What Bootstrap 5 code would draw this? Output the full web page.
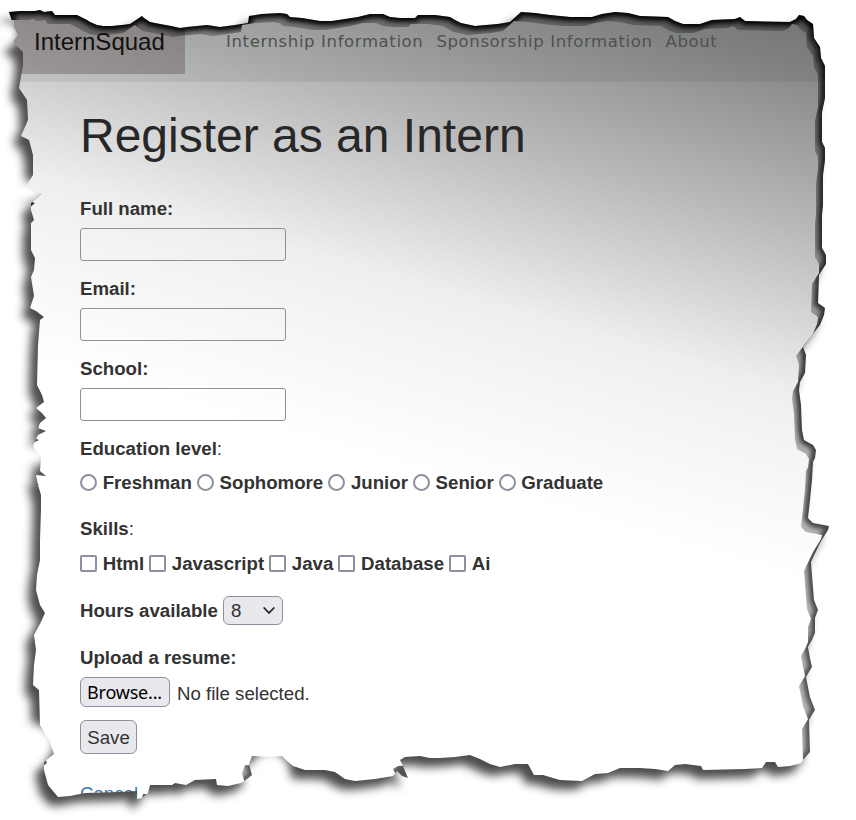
<!DOCTYPE html>
<html lang="en">
<head>
<meta charset="utf-8">
<meta name="viewport" content="width=device-width, initial-scale=1">
<title>Register as an Intern</title>
<link href="https://cdn.jsdelivr.net/npm/bootstrap@5.3.0/dist/css/bootstrap.min.css" rel="stylesheet">
<style>
  body { background: #fff; color: #333; font-family: "Liberation Sans", Arial, sans-serif; font-size: 18.67px; line-height: 28px; }
  .sheet { width: 856px; height: 820px; background: linear-gradient(196deg, #727272 0%, #888 8%, #b9b9b9 23%, #eee 38.4%, #f4f4f4 44%, #fff 56%); }
  .site-nav { height: 82px; padding: 0 0 0 14px; background: rgba(40, 65, 70, .09); }
  .site-brand { width: 171px; height: 74px; padding: 24px 0 0 20px; background: rgba(45, 25, 20, .25); color: #111; font-size: 24px; line-height: 36px; text-decoration: none; }
  .site-links { margin-left: 41px; padding-top: 28px; font-family: "DejaVu Sans", Verdana, sans-serif; font-size: 16.5px; }
  .site-links a { color: #505050; text-decoration: none; margin-right: 13px; letter-spacing: .62px; }
  .reg-form { padding: 25px 0 0 80px; }
  .reg-form h1 { font-size: 48px; line-height: 58px; font-weight: 400; color: #272727; margin: 0 0 29px; }
  .field-label { height: 28px; line-height: 30px; margin-bottom: 6px; }
  .text-box { width: 206px; height: 33px; margin-bottom: 13px; padding: 0 6px; border: 1px solid #8f8f9d; border-radius: 3px; background: transparent; }
  .options { gap: 5px; height: 28px; line-height: 30px; }
  .options label { gap: 5.7px; }
  .options input { appearance: none; width: 17px; height: 17px; border: 2px solid #8f8f9d; margin: 6px 0 0; background: #fff; }
  .options input[type=radio] { border-radius: 50%; }
  .options input[type=checkbox] { border-radius: 2px; }
  .level-row { margin-bottom: 18px; }
  .skill-title { margin-bottom: 7px; }
  .skill-row { margin-bottom: 19px; }
  .hours-row { margin-bottom: 18px; }
  .file-row { margin-bottom: 13px; }
  .grey-btn { background: #e9e9ed; border: 1px solid #8f8f9d; border-radius: 6px; color: #333; }
  .hours { width: 60px; height: 29px; margin-left: 5px; padding: 0 6px 0 7px; }
  .browse { width: 90px; height: 30px; color: #000; font-family: "Noto Sans", sans-serif; font-size: 18px; letter-spacing: -.2px; line-height: 28px; padding: 0 1px 0 0; }
  .file-name { margin-left: 7px; padding-top: 3px; line-height: 27px; }
  .save { width: 57px; height: 34px; padding: 1px 0 0; }
  .cancel-row { margin-top: 26px; }
  .cancel-link { color: #337ab7; text-decoration: none; }
  .torn { pointer-events: none; }
</style>
</head>
<body>
<div class="sheet position-relative overflow-hidden">
  <nav class="site-nav d-flex align-items-start">
    <a class="site-brand" href="#">InternSquad</a>
    <div class="site-links d-flex text-nowrap">
      <a href="#">Internship Information</a>
      <a href="#">Sponsorship Information</a>
      <a href="#">About</a>
    </div>
  </nav>

  <form class="reg-form">
    <h1>Register as an Intern</h1>
    <label class="field-label d-block fw-bold" for="fullName">Full name:</label>
    <input class="text-box d-block" type="text" id="fullName">
    <label class="field-label d-block fw-bold" for="email">Email:</label>
    <input class="text-box d-block" type="text" id="email">
    <label class="field-label d-block fw-bold" for="school">School:</label>
    <input class="text-box d-block" type="text" id="school">

    <div class="field-label"><b>Education level</b>:</div>
    <div class="options level-row d-flex fw-bold">
      <label class="d-flex align-items-start"><input type="radio" name="level">Freshman</label>
      <label class="d-flex align-items-start"><input type="radio" name="level">Sophomore</label>
      <label class="d-flex align-items-start"><input type="radio" name="level">Junior</label>
      <label class="d-flex align-items-start"><input type="radio" name="level">Senior</label>
      <label class="d-flex align-items-start"><input type="radio" name="level">Graduate</label>
    </div>

    <div class="field-label skill-title"><b>Skills</b>:</div>
    <div class="options skill-row d-flex fw-bold">
      <label class="d-flex align-items-start"><input type="checkbox">Html</label>
      <label class="d-flex align-items-start"><input type="checkbox">Javascript</label>
      <label class="d-flex align-items-start"><input type="checkbox">Java</label>
      <label class="d-flex align-items-start"><input type="checkbox">Database</label>
      <label class="d-flex align-items-start"><input type="checkbox">Ai</label>
    </div>

    <div class="hours-row d-flex align-items-center">
      <b>Hours available</b>
      <div class="hours grey-btn d-flex align-items-center justify-content-between">
        <span>8</span>
        <svg width="14" height="9" viewBox="0 0 14 9" fill="none" stroke="#222" stroke-width="1.8" stroke-linecap="round" stroke-linejoin="round"><path d="M2.2 2 7 7 11.800 2"/></svg>
      </div>
    </div>

    <div class="field-label fw-bold">Upload a resume:</div>
    <div class="file-row d-flex align-items-center">
      <button class="browse grey-btn" type="button">Browse...</button>
      <span class="file-name">No file selected.</span>
    </div>
    <button class="save grey-btn d-block" type="button">Save</button>
    <div class="cancel-row"><a class="cancel-link" href="#">Cancel</a></div>
  </form>

  <!-- torn paper edge: the sheet outline, its cast shadow and the shaded inner rim -->
  <svg class="torn position-absolute top-0 start-0" width="856" height="820" viewBox="0 0 856 820">
    <defs>
      <path id="outline" d="M9 12 20 11 35 11 40 10 44 12 52 11 55 15 77 15 87 20 90 22 97 25 103 26 112 26 122 25 130 24 142 16 144 18 150 22 160 24 171 26 180 28 187 27 207 25 220 27 235 25 248 23 249 16 262 14 280 13 287 14 290 17 302 18 320 21 332 21 345 19 358 17 370 14 383 14 390 17 400 18 415 18 418 15 435 15 450 17 455 20 461 23 475 26 486 25 498 24 510 22 521 12 535 13 550 15 570 17 592 17 602 14 615 12 628 13 640 16 668 17 675 21 683 24 700 24 712 20 735 19 740 17 745 21 790 22 796 19 799 15 804 16 807 20 813 24 814 38 820 47 821 58 825 66 825 98 822 112 822 142 825 148 825 160 823 175 823 205 822 215 822 248 826 255 826 264 819 275 818 303 825 308 824 315 820 325 812 335 803 347 806 355 805 373 800 382 799 390 801 405 802 430 804 440 813 445 816 450 815 458 813 462 812 480 810 500 808 518 813 523 829 526 828 530 820 543 811 562 812 575 814 600 818 610 815 618 815 633 812 640 808 647 810 658 812 667 806 677 810 697 815 710 809 720 810 752 803 760 802 763 790 766 778 767 775 762 766 762 762 768 745 769 703 770 701 766 685 764 675 765 668 771 655 769 640 768 620 768 608 773 595 774 582 781 560 780 553 778 543 775 534 775 528 764 515 764 500 767 490 764 480 759 470 755 455 757 440 758 430 758 420 756 405 757 400 760 403 766 408 778 402 776 397 771 393 776 375 779 355 781 345 779 335 772 325 770 305 770 293 766 286 760 282 756 270 757 252 756 249 764 252 775 247 779 241 783 228 786 217 785 216 779 195 780 186 785 175 783 172 785 150 785 148 793 142 798 137 799 137 791 120 792 85 793 70 796 58 797 48 785 44 770 44 762 54 754 50 742 40 725 39 690 33 685 34 665 36 650 34 635 41 622 45 613 40 605 36 590 37 575 40 560 40 540 41 510 41 495 38 485 36 475 46 476 40 471 41 458 35 450 33 446 38 435 46 431 38 428 40 423 46 418 42 413 36 408 44 402 42 395 37 385 38 345 40 320 44 317 36 311 30 308 34 296 31 277 34 270 35 258 31 250 31 223 34 220 31 210 31 203 35 200 42 194 30 190 27 185 33 175 33 155 29 140 21 136 28 120 27 100 19 88 23 65 23 52 17 46 12 43 18 35 14 27Z"/>
      <filter id="cast" x="-10%" y="-10%" width="120%" height="120%"><feGaussianBlur stdDeviation="4.6"/></filter>
      <filter id="rim" x="-10%" y="-10%" width="120%" height="120%"><feGaussianBlur stdDeviation="2.6"/></filter>
      <filter id="glow" x="-80%" y="-80%" width="260%" height="260%"><feGaussianBlur stdDeviation="5"/></filter>
      <linearGradient id="rimTone" gradientUnits="userSpaceOnUse" x1="0" y1="0" x2="0" y2="820">
        <stop offset="0" stop-color="#000"/><stop offset=".15" stop-color="#1c1c1c"/><stop offset="1" stop-color="#555"/>
      </linearGradient>
      <mask id="outside" maskUnits="userSpaceOnUse" x="0" y="0" width="856" height="820">
        <rect width="856" height="820" fill="#fff"/><use href="#outline" fill="#000"/>
      </mask>
      <mask id="rimOnly" maskUnits="userSpaceOnUse" x="0" y="0" width="856" height="820">
        <use href="#outline" fill="#fff"/><use href="#outline" fill="#000" x="-7" y="9"/>
      </mask>
    </defs>
    <g mask="url(#outside)">
      <rect width="856" height="820" fill="#fff"/>
      <use href="#outline" fill="#000" fill-opacity=".7" x="-8" y="9" filter="url(#cast)"/>
      <g fill="#fff" filter="url(#glow)">
        <ellipse cx="5" cy="34" rx="14" ry="13"/>
        <ellipse cx="18" cy="192" rx="28" ry="12"/>
        <ellipse cx="20" cy="456" rx="28" ry="13"/>
        <ellipse cx="28" cy="744" rx="27" ry="21"/>
        <ellipse cx="270" cy="772" rx="20" ry="21"/>
      </g>
    </g>
    <g mask="url(#rimOnly)">
      <use href="#outline" fill="#000" fill-opacity=".28"/>
      <use href="#outline" fill="none" stroke="url(#rimTone)" stroke-width="8" filter="url(#rim)"/>
    </g>
  </svg>
</div>
<script src="https://cdn.jsdelivr.net/npm/bootstrap@5.3.0/dist/js/bootstrap.bundle.min.js"></script>
</body>
</html>
